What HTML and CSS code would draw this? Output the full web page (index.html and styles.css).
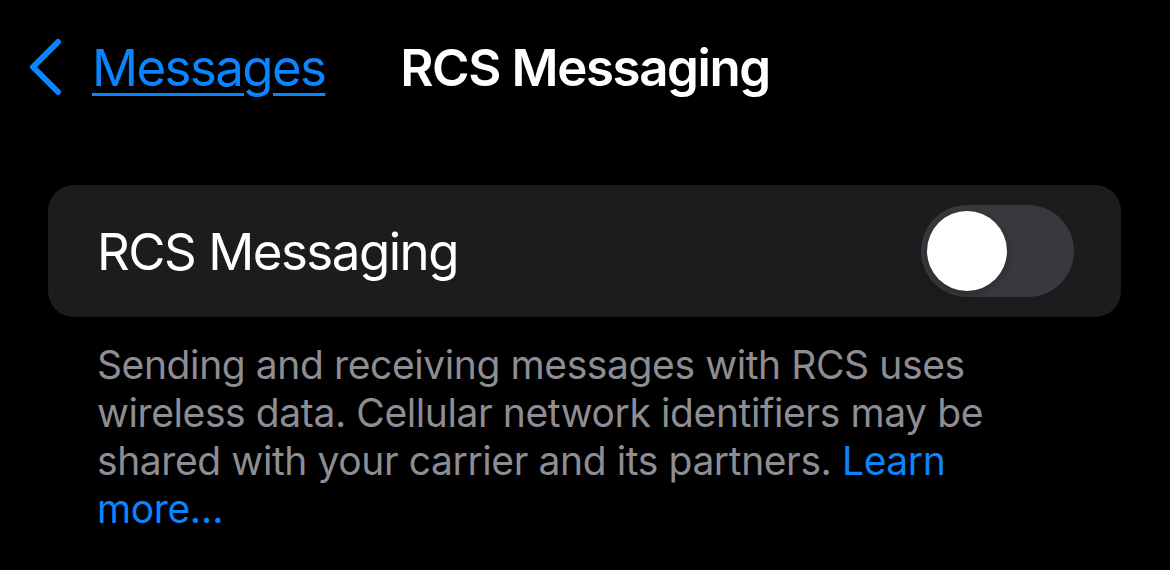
FILE: index.html
```html
<!DOCTYPE html>
<html lang="en">
<head>
  <meta charset="UTF-8">
  <title>RCS Messaging</title>
  <link rel="stylesheet" href="styles.css">
</head>
<body>

  <header class="navbar">
    <div class="nav-left">
      <svg class="chevron" width="36" height="58" viewBox="0 0 36 58">
        <path d="M30 4 L5 29 L30 54" fill="none" stroke="#0a84ff" stroke-width="6" stroke-linecap="round" stroke-linejoin="round"/>
      </svg>
      <a href="#" class="back-link">Messages</a>
    </div>
    <h1 class="nav-title">RCS Messaging</h1>
    <div class="nav-right"></div>
  </header>

  <section class="group">
    <div class="row">
      <span class="row-label">RCS Messaging</span>
      <label class="switch">
        <input type="checkbox">
        <span class="knob"></span>
      </label>
    </div>
  </section>

  <p class="footnote">
    Sending and receiving messages with RCS uses wireless data. Cellular network identifiers may be shared with your carrier and its partners. <a href="#" class="learn">Learn more…</a>
  </p>

</body>
</html>
```

FILE: styles.css
```css
* {
  box-sizing: border-box;
}

body {
  font-family: Inter, 'Noto Sans', sans-serif;
  background-color: #000000;
  color: #ffffff;
  margin: 0;
  padding: 0;
  width: 1170px;
  height: 570px;
  overflow: hidden;
}

.navbar {
  display: grid;
  grid-template-columns: 1fr auto 1fr;
  align-items: center;
  height: 134px;
  padding: 0 28px;
}

.nav-left {
  display: flex;
  align-items: center;
  gap: 28px;
}

.chevron {
  display: block;
}

.back-link {
  color: #0a84ff;
  font-size: 51px;
  letter-spacing: -1.6px;
  text-decoration: underline;
  text-underline-offset: 7px;
  text-decoration-thickness: 3px;
}

.nav-title {
  margin: 0;
  font-size: 51px;
  font-weight: 600;
  letter-spacing: -1.4px;
}

.group {
  margin: 51px 49px 0 48px;
  background-color: #1c1c1e;
  border-radius: 26px;
}

.row {
  display: flex;
  align-items: center;
  justify-content: space-between;
  height: 132px;
  padding: 0 47px 0 49px;
}

.row-label {
  font-size: 51px;
  letter-spacing: -1.5px;
}

.switch {
  position: relative;
  display: block;
  width: 153px;
  height: 92px;
  border-radius: 46px;
  background-color: #39393d;
}

.switch input {
  display: none;
}

.knob {
  position: absolute;
  top: 6px;
  left: 6px;
  width: 80px;
  height: 80px;
  border-radius: 50%;
  background-color: #ffffff;
  box-shadow: 0 3px 8px rgba(0, 0, 0, 0.25);
}

.footnote {
  margin: 24px 0 0 0;
  padding: 0 140px 0 97px;
  font-size: 39px;
  line-height: 48px;
  letter-spacing: -0.4px;
  color: #8d8d93;
}

.learn {
  color: #0a84ff;
  text-decoration: none;
}
```
